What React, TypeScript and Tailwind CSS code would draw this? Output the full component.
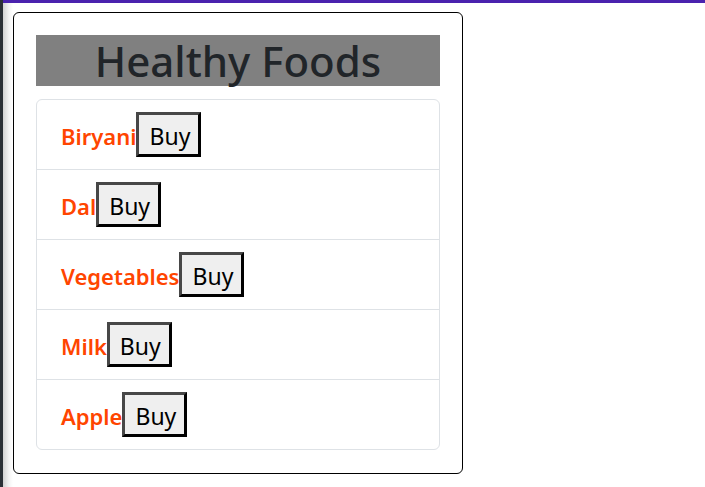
import React from "react";

const foods = ["Biryani", "Dal", "Vegetables", "Milk", "Apple"];

export default function App() {
  return (
    <div className="flex h-[487px] w-[705px] overflow-hidden bg-white" style={{ fontFamily: '"Noto Sans", "Open Sans", sans-serif' }}>
      <div className="w-[3px] shrink-0 bg-[#2b3036]" />
      <div className="flex flex-1 flex-col">
        <div className="h-[3px] bg-[#4a22ae]" />
        <div className="flex-1 bg-[linear-gradient(to_right,#d2d2d2_0px,#f4f4f4_6px,#ffffff_10px)] pl-[10px] pt-[9px]">
          <div className="w-[450px] rounded-[6px] border border-black bg-white px-[22px] pb-[23px] pt-[22px]">
            <h1 className="bg-[#808080] text-center text-[42px] font-medium leading-[51px] text-[#212529]">
              Healthy Foods
            </h1>
            <ul className="mt-[13px] rounded-[6px] border border-[#dee2e6]">
              {foods.map((f, i) => (
                <li
                  key={f}
                  className={`flex items-center py-3 pl-6 ${i > 0 ? "border-t border-[#dee2e6]" : ""}`}
                >
                  <span className="mt-[4px] text-[22px] font-semibold text-[#ff4500]">{f}</span>
                  <button className="h-[45px] border-[3px] border-b-black border-l-[#474747] border-r-black border-t-[#474747] bg-[#efefef] pl-[10px] pr-[8px] pt-[3px] text-[23px] leading-[36px] text-black">
                    Buy
                  </button>
                </li>
              ))}
            </ul>
          </div>
        </div>
      </div>
    </div>
  );
}
